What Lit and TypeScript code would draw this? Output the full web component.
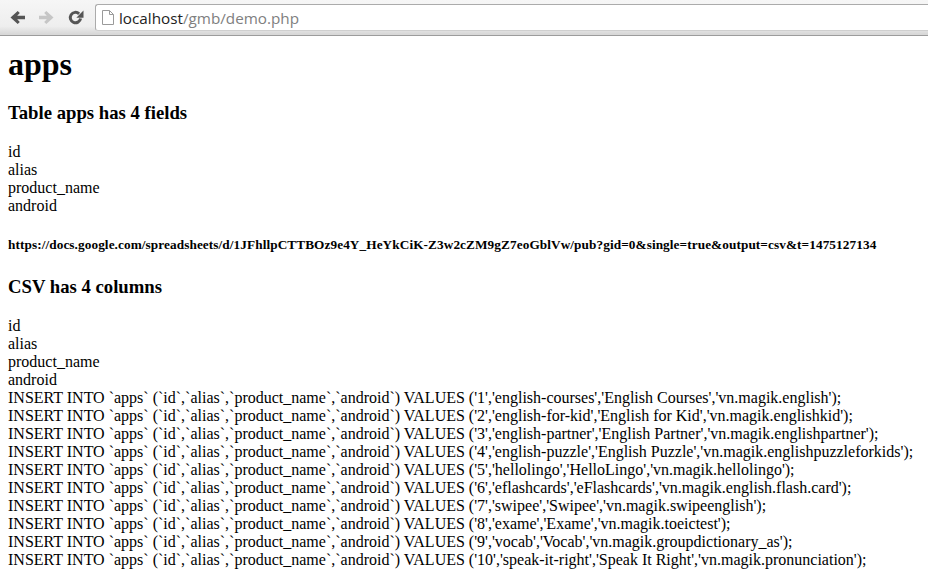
import { LitElement, html, css } from "lit";
import { customElement } from "lit/decorators.js";

const cols = "INSERT INTO `apps` (`id`,`alias`,`product_name`,`android`) VALUES ";
const rows = [
  "('1','english-courses','English Courses','vn.magik.english');",
  "('2','english-for-kid','English for Kid','vn.magik.englishkid');",
  "('3','english-partner','English Partner','vn.magik.englishpartner');",
  "('4','english-puzzle','English Puzzle','vn.magik.englishpuzzleforkids');",
  "('5','hellolingo','HelloLingo','vn.magik.hellolingo');",
  "('6','eflashcards','eFlashcards','vn.magik.english.flash.card');",
  "('7','swipee','Swipee','vn.magik.swipeenglish');",
  "('8','exame','Exame','vn.magik.toeictest');",
  "('9','vocab','Vocab','vn.magik.groupdictionary_as');",
  "('10','speak-it-right','Speak It Right','vn.magik.pronunciation');",
];
const fields = ["id", "alias", "product_name", "android"];

@customElement("app-root")
export class AppRoot extends LitElement {
  static styles = css`
    :host { display: block; width: 928px; height: 581px; overflow: hidden; background: #fff; color: #000;
      font-family: "Liberation Serif", "Times New Roman", serif; font-size: 16px; line-height: 18px; }
    .bar { height: 36px; box-sizing: border-box; display: flex; align-items: flex-start; padding: 4px 0 0 10px;
      background: linear-gradient(#f6f6f6, #eeeeee 75%, #d8d8d8 97%); border-bottom: 1px solid #9c9c9c; }
    .nav { display: flex; align-items: center; gap: 14px; width: 85px; height: 27px; flex: none; }
    .nav svg { display: block; flex: none; }
    .url { flex: 1; height: 27px; box-sizing: border-box; background: #fff; border: 1px solid #ababab; border-right: 0;
      border-bottom-color: #cfcfcf; border-radius: 3px 0 0 3px; display: flex; align-items: center; gap: 5px; padding-left: 6px;
      font-family: "Open Sans", "Noto Sans", sans-serif; font-size: 15.25px; color: #808080; }
    .host { color: #222; }
    main { padding: 0 8px; }
    h1 { margin: 10px 0 0; font-size: 32px; line-height: 37px; font-weight: bold; }
    h3 { margin: 0; font-size: 18.72px; line-height: 22px; font-weight: bold; }
    .h3a { margin-top: 19px; }
    .list { margin-top: 19px; }
    h5 { margin: 22px 0 0; font-size: 13.28px; line-height: 15px; font-weight: bold; letter-spacing: 0.083px; white-space: nowrap; }
    .h3b { margin-top: 24px; }
    .row { white-space: nowrap; }
  `;

  render() {
    return html`
      <div class="bar">
        <div class="nav">
          <svg width="15" height="13" viewBox="0 0 15 13"><path d="M15 4.700H7.200l2.600-2.600L7.700 0 .5 6.500 7.700 13l2.100-2.100-2.600-2.600H15z" fill="#555"/></svg>
          <svg width="15" height="13" viewBox="0 0 15 13"><path d="M0 4.700h7.800L5.200 2.100 7.300 0l7.200 6.500L7.300 13l-2.100-2.100 2.600-2.600H0z" fill="#c6c6c6"/></svg>
          <svg width="16" height="15" viewBox="0 0 16 15"><path d="M12.600 8.500a5.200 5.200 0 1 1-1.500-4.700" fill="none" stroke="#555" stroke-width="3"/><path d="M15.500 .5v7.200H8.300z" fill="#555"/></svg>
        </div>
        <div class="url">
          <svg width="12" height="15" viewBox="0 0 12 15"><path d="M.5.500h7l4 4v10H.5z M7.500.500v4h4" fill="#fff" stroke="#9a9a9a"/></svg>
          <span><span class="host">localhost</span>/gmb/demo.php</span>
        </div>
      </div>
      <main>
        <h1>apps</h1>
        <h3 class="h3a">Table apps has 4 fields</h3>
        <div class="list">${fields.map((f) => html`<div class="row">${f}</div>`)}</div>
        <h5>https://docs.google.com/spreadsheets/d/1JFhllpCTTBOz9e4Y_HeYkCiK-Z3w2cZM9gZ7eoGblVw/pub?gid=0&amp;single=true&amp;output=csv&amp;t=1475127134</h5>
        <h3 class="h3b">CSV has 4 columns</h3>
        <div class="list">${fields.map((f) => html`<div class="row">${f}</div>`)}
          ${rows.map((r) => html`<div class="row">${cols}${r}</div>`)}</div>
      </main>
    `;
  }
}
